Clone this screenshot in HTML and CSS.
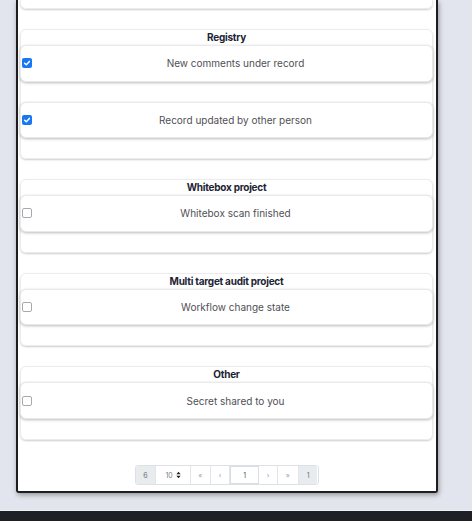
FILE: index.html
```html
<!DOCTYPE html>
<html lang="en">
<head>
<meta charset="utf-8">
<title>Notifications</title>
<link rel="stylesheet" href="styles.css">
</head>
<body>
<div class="panel">
  <div class="fragment"></div>
  <div class="groups">
    <section class="group">
      <h3 class="group-title">Registry</h3>
      <div class="row">
        <span class="cb checked"><svg viewBox="0 0 10 10" width="10" height="10"><path d="M2.6 5.2 L4.3 6.8 L7.4 3.4" fill="none" stroke="#fff" stroke-width="1.5" stroke-linecap="round" stroke-linejoin="round"/></svg></span>
        <span class="label">New comments under record</span>
      </div>
      <div class="row">
        <span class="cb checked"><svg viewBox="0 0 10 10" width="10" height="10"><path d="M2.6 5.2 L4.3 6.8 L7.4 3.4" fill="none" stroke="#fff" stroke-width="1.5" stroke-linecap="round" stroke-linejoin="round"/></svg></span>
        <span class="label">Record updated by other person</span>
      </div>
    </section>
    <section class="group">
      <h3 class="group-title">Whitebox project</h3>
      <div class="row">
        <span class="cb"></span>
        <span class="label">Whitebox scan finished</span>
      </div>
    </section>
    <section class="group">
      <h3 class="group-title">Multi target audit project</h3>
      <div class="row">
        <span class="cb"></span>
        <span class="label">Workflow change state</span>
      </div>
    </section>
    <section class="group">
      <h3 class="group-title">Other</h3>
      <div class="row">
        <span class="cb"></span>
        <span class="label">Secret shared to you</span>
      </div>
    </section>
  </div>
  <nav class="pager">
    <span class="seg info w21">6</span>
    <span class="seg w35 select">10 <svg viewBox="0 0 6 9" width="5" height="8"><path d="M3 0.5 L5.6 3.6 H0.4 Z M3 8.5 L5.6 5.4 H0.4 Z" fill="#222"/></svg></span>
    <span class="seg w20 nav">«</span>
    <span class="seg w20 nav">‹</span>
    <span class="seg w29 input">1</span>
    <span class="seg w19 nav">›</span>
    <span class="seg w21 nav">»</span>
    <span class="seg w19 info last">1</span>
  </nav>
</div>
<div class="footer"></div>
</body>
</html>
```
FILE: styles.css
```css
* { box-sizing: border-box; }
html, body { margin: 0; padding: 0; }
body {
  background: #e2e5ed;
  font-family: Inter, "Noto Sans", sans-serif;
  width: 472px;
  height: 521px;
  overflow: hidden;
}
.panel {
  margin-left: 16px;
  width: 422px;
  background: #fff;
  border: 2px solid #1d1d1f;
  border-top: none;
  border-radius: 0 0 3px 3px;
  padding: 0 3px 6px 2px;
  box-shadow: 1px 2px 5px rgba(0, 0, 0, 0.35);
}
.fragment {
  height: 9px;
  border: 1px solid #ececec;
  border-top: none;
  border-radius: 0 0 6px 6px;
  box-shadow: 0 1px 2px rgba(0, 0, 0, 0.2);
}
.groups {
  margin-top: 20px;
  display: flex;
  flex-direction: column;
  gap: 20px;
}
.group {
  border: 1px solid #ececec;
  border-radius: 6px;
  box-shadow: 0 1px 2px rgba(0, 0, 0, 0.2);
  padding-bottom: 20px;
}
.group-title {
  margin: 0;
  height: 15px;
  line-height: 15px;
  text-align: center;
  font-size: 10px;
  font-weight: 700;
  color: #1c2434;
  letter-spacing: -0.25px;
}
.row {
  margin: 0 -1px 20px;
  height: 36.6px;
  display: grid;
  grid-template-columns: 18px 1fr;
  align-items: center;
  border: 1px solid #e9e9e9;
  border-radius: 6px;
  box-shadow: 0 1px 3px rgba(0, 0, 0, 0.27);
  background: #fff;
}
.row:last-child { margin-bottom: 0; }
.cb {
  margin-left: 1px;
  width: 10px;
  height: 10px;
  border: 1px solid #a9a9ad;
  border-radius: 2px;
  background: #fff;
  display: flex;
}
.cb.checked {
  border: none;
  background: #1877f2;
}
.label {
  text-align: center;
  font-size: 10px;
  color: #505055;
}
.pager {
  margin: 25px auto 0;
  width: 184px;
  height: 20.4px;
  display: flex;
  border: 1px solid #dde0e5;
  border-radius: 3px;
  font-size: 7px;
  color: #8a8d92;
}
.seg {
  display: flex;
  align-items: center;
  justify-content: center;
  border-right: 1px solid #e3e5e9;
}
.seg:last-child { border-right: none; }
.w21 { width: 21px; }
.w35 { width: 35px; }
.w20 { width: 20px; }
.w29 { width: 29px; }
.w19 { width: 19px; }
.info { background: #e9ecef; color: #6c7075; }
.info.last { border-radius: 0 2px 2px 0; }
.pager .info:first-child { border-radius: 2px 0 0 2px; }
.select { gap: 3px; color: #7a7d82; }
.nav { color: #a0a3a8; font-size: 7px; }
.input { border: 1px solid #dadde2; color: #555; }
.footer {
  margin-top: 16.3px;
  height: 11px;
  border-top: 1px solid #eef0f4;
  background: #1f2026;
}
```
